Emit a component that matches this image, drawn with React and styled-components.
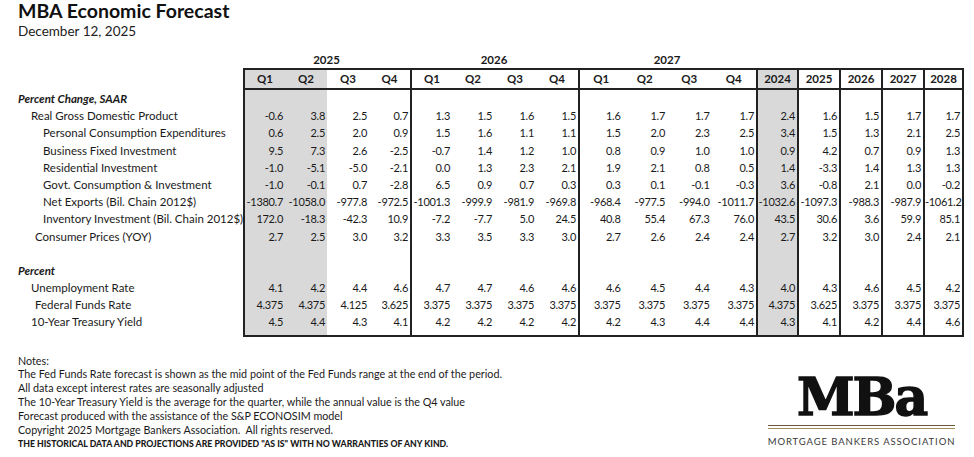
import React from 'react';
import styled, { createGlobalStyle } from 'styled-components';

const GlobalStyle = createGlobalStyle`
  body {
    margin: 0;
    background: #ffffff;
    color: #1a1a1a;
    font-family: Lato, "Open Sans", sans-serif;
  }
`;

// column widths: label, 2025 Q1-Q4, 2026 Q1-Q4, 2027 Q1-Q4, annual 2024-2028
const COLS = '225px 42px 42px 42px 41px 42px 42px 42px 42px 44.5px 44.5px 44.5px 44.5px 41px 42px 42px 42px 41px';

const Page = styled.div`
  width: 974px;
  height: 457px;
  box-sizing: border-box;
  padding: 0 19px 0 18px;
  overflow: hidden;
`;

const Title = styled.h1`
  margin: 0;
  font-size: 19.5px;
  line-height: 22px;
  font-weight: 700;
  color: #111;
`;

const DateLine = styled.div`
  margin-top: 1px;
  font-size: 13.5px;
  line-height: 17px;
  color: #222;
`;

const Table = styled.div`
  margin-top: 12px;
  width: 946px;
`;

const Row = styled.div`
  display: grid;
  grid-template-columns: ${COLS};
  height: ${(p) => p.$h || 17.2}px;
`;

const YearLabel = styled.div`
  grid-column: span ${(p) => p.$span || 1};
  text-align: center;
  font-size: 11.5px;
  font-weight: 700;
  line-height: 16px;
`;

const Cell = styled.div`
  box-sizing: border-box;
  background: ${(p) => (p.$shade ? '#d9d9d9' : 'transparent')};
  border-left: ${(p) => (p.$left ? '2px solid #222' : 'none')};
  border-right: ${(p) => (p.$right ? '2px solid #222' : 'none')};
  border-top: ${(p) => (p.$top ? '2px solid #222' : 'none')};
  border-bottom: ${(p) => (p.$bottom ? '2px solid #222' : 'none')};
  font-size: 11px;
  letter-spacing: -0.3px;
  line-height: 17px;
  text-align: right;
  padding-right: 2px;
  white-space: nowrap;
`;

const HeadCell = styled(Cell)`
  text-align: center;
  padding-right: 0;
  font-size: 11.5px;
  letter-spacing: 0;
  font-weight: 700;
  line-height: 18px;
`;

const Label = styled.div`
  font-size: 11.5px;
  line-height: 17px;
  padding-left: ${(p) => p.$indent || 0}px;
  white-space: nowrap;
  font-weight: ${(p) => (p.$section ? 700 : 400)};
  font-style: ${(p) => (p.$section ? 'italic' : 'normal')};
`;

const Footer = styled.div`
  margin-top: 17px;
  display: flex;
  justify-content: space-between;
  align-items: flex-end;
`;

const Notes = styled.div`
  font-size: 10.75px;
  line-height: 13.8px;
  color: #1a1a1a;
`;

const Disclaimer = styled.div`
  margin-top: 1px;
  font-size: 8.7px;
  font-weight: 900;
  line-height: 13.8px;
`;

const Logo = styled.div`
  width: 187px;
  display: flex;
  flex-direction: column;
  align-items: center;
  margin-bottom: 4px;
`;

const LogoMark = styled.div`
  font-family: "DejaVu Serif", serif;
  font-weight: 700;
  font-size: 52px;
  line-height: 44px;
  letter-spacing: -2px;
  color: #111;
  -webkit-text-stroke: 1.5px #111;
`;

const Rule = styled.div`
  width: 100%;
  height: 1.5px;
  background: ${(p) => p.$color};
  margin-top: ${(p) => p.$gap}px;
`;

const Tagline = styled.div`
  margin-top: 7px;
  font-family: Lato, sans-serif;
  font-size: 9.5px;
  letter-spacing: 0.9px;
  color: #3a3a3a;
  white-space: nowrap;
`;

// which data column (0-16) gets a left separator / shading
const LEFT = [0, 4, 8, 12, 13, 14, 15, 16];
const SHADE = [0, 1, 12];

const rows = [
  { label: 'Percent Change, SAAR', section: true },
  { label: 'Real Gross Domestic Product', indent: 13, v: '-0.6 3.8 2.5 0.7 1.3 1.5 1.6 1.5 1.6 1.7 1.7 1.7 2.4 1.6 1.5 1.7 1.7' },
  { label: 'Personal Consumption Expenditures', indent: 25, v: '0.6 2.5 2.0 0.9 1.5 1.6 1.1 1.1 1.5 2.0 2.3 2.5 3.4 1.5 1.3 2.1 2.5' },
  { label: 'Business Fixed Investment', indent: 25, v: '9.5 7.3 2.6 -2.5 -0.7 1.4 1.2 1.0 0.8 0.9 1.0 1.0 0.9 4.2 0.7 0.9 1.3' },
  { label: 'Residential Investment', indent: 25, v: '-1.0 -5.1 -5.0 -2.1 0.0 1.3 2.3 2.1 1.9 2.1 0.8 0.5 1.4 -3.3 1.4 1.3 1.3' },
  { label: 'Govt. Consumption & Investment', indent: 25, v: '-1.0 -0.1 0.7 -2.8 6.5 0.9 0.7 0.3 0.3 0.1 -0.1 -0.3 3.6 -0.8 2.1 0.0 -0.2' },
  { label: 'Net Exports (Bil. Chain 2012$)', indent: 25, v: '-1380.7 -1058.0 -977.8 -972.5 -1001.3 -999.9 -981.9 -969.8 -968.4 -977.5 -994.0 -1011.7 -1032.6 -1097.3 -988.3 -987.9 -1061.2' },
  { label: 'Inventory Investment (Bil. Chain 2012$)', indent: 25, v: '172.0 -18.3 -42.3 10.9 -7.2 -7.7 5.0 24.5 40.8 55.4 67.3 76.0 43.5 30.6 3.6 59.9 85.1' },
  { label: 'Consumer Prices (YOY)', indent: 17, v: '2.7 2.5 3.0 3.2 3.3 3.5 3.3 3.0 2.7 2.6 2.4 2.4 2.7 3.2 3.0 2.4 2.1' },
  { label: '' },
  { label: 'Percent', section: true },
  { label: 'Unemployment Rate', indent: 13, v: '4.1 4.2 4.4 4.6 4.7 4.7 4.6 4.6 4.6 4.5 4.4 4.3 4.0 4.3 4.6 4.5 4.2' },
  { label: 'Federal Funds Rate', indent: 17, v: '4.375 4.375 4.125 3.625 3.375 3.375 3.375 3.375 3.375 3.375 3.375 3.375 4.375 3.625 3.375 3.375 3.375' },
  { label: '10-Year Treasury Yield', indent: 13, v: '4.5 4.4 4.3 4.1 4.2 4.2 4.2 4.2 4.2 4.3 4.4 4.4 4.3 4.1 4.2 4.4 4.6' },
];

const heads = ['Q1', 'Q2', 'Q3', 'Q4', 'Q1', 'Q2', 'Q3', 'Q4', 'Q1', 'Q2', 'Q3', 'Q4', '2024', '2025', '2026', '2027', '2028'];
const empty = Array(17).fill('');

function DataCells({ values, bottom }) {
  return values.map((val, i) => (
    <Cell key={i} $shade={SHADE.includes(i)} $left={LEFT.includes(i)} $right={i === 16} $bottom={bottom}>
      {val}
    </Cell>
  ));
}

export default function App() {
  return (
    <Page>
      <GlobalStyle />
      <Title>MBA Economic Forecast</Title>
      <DateLine>December 12, 2025</DateLine>

      <Table>
        <Row $h={16}>
          <div />
          <YearLabel $span={4}>2025</YearLabel>
          <YearLabel $span={4}>2026</YearLabel>
          <YearLabel $span={4}>2027</YearLabel>
        </Row>
        <Row $h={22}>
          <div />
          {heads.map((h, i) => (
            <HeadCell key={i} $shade={SHADE.includes(i)} $left={LEFT.includes(i)} $right={i === 16} $top $bottom>
              {h}
            </HeadCell>
          ))}
        </Row>
        {rows.map((r, idx) => (
          <Row key={idx}>
            <Label $indent={r.indent} $section={r.section}>{r.label}</Label>
            <DataCells values={r.v ? r.v.split(' ') : empty} />
          </Row>
        ))}
        <Row $h={6}>
          <div />
          <DataCells values={empty} bottom />
        </Row>
      </Table>

      <Footer>
        <Notes>
          <div>Notes:</div>
          <div>The Fed Funds Rate forecast is shown as the mid point of the Fed Funds range at the end of the period.</div>
          <div>All data except interest rates are seasonally adjusted</div>
          <div>The 10-Year Treasury Yield is the average for the quarter, while the annual value is the Q4 value</div>
          <div>Forecast produced with the assistance of the S&amp;P ECONOSIM model</div>
          <div>Copyright 2025 Mortgage Bankers Association.&nbsp; All rights reserved.</div>
          <Disclaimer>THE HISTORICAL DATA AND PROJECTIONS ARE PROVIDED "AS IS" WITH NO WARRANTIES OF ANY KIND.</Disclaimer>
        </Notes>
        <Logo>
          <LogoMark>MBa</LogoMark>
          <Rule $color="#6b5836" $gap={6} />
          <Rule $color="#a38c5c" $gap={1.5} />
          <Tagline>MORTGAGE BANKERS ASSOCIATION</Tagline>
        </Logo>
      </Footer>
    </Page>
  );
}
